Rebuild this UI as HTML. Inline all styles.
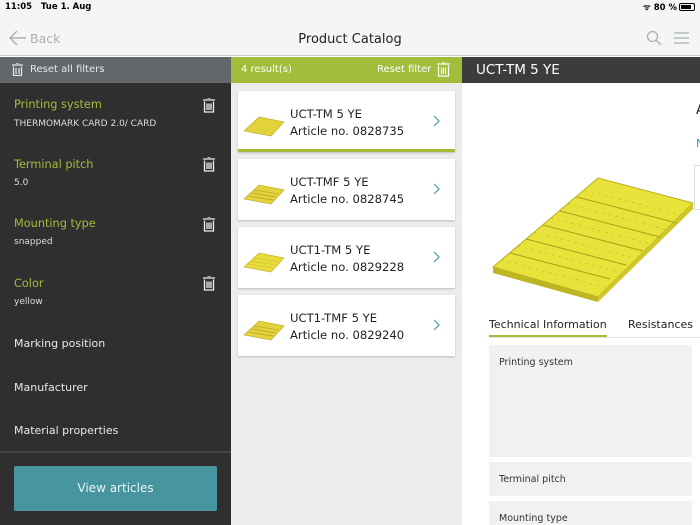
<!DOCTYPE html>
<html><head><meta charset="utf-8"><style>
*{margin:0;padding:0;box-sizing:border-box}
html,body{width:700px;height:525px;overflow:hidden}
body{font-family:"DejaVu Sans","Liberation Sans",sans-serif;position:relative;background:#fff}
.a{position:absolute}
.st{font-size:8.5px;color:#000;font-weight:bold}
.lab{color:#a2bd3a;font-size:11.3px}
.val{color:#ddd;font-size:9px}
.it{color:#e8e8e8;font-size:11px}
.card{position:absolute;left:238px;width:217px;height:61px;background:#fff;box-shadow:0 1px 2px rgba(0,0,0,.2)}
.card .t{position:absolute;left:52px;top:15px;font-size:11.6px;color:#222;line-height:17px}
.card svg.c{position:absolute;right:15px;top:24px}
.box{position:absolute;left:489px;width:203px;background:#f1f1f1;font-size:9.5px;color:#333;padding:10px}
</style></head><body>
<div class="a" style="left:0;top:0;width:700px;height:56px;background:#f5f5f5;border-bottom:1px solid #ccc"></div>
<div class="a st" style="left:5px;top:2px">11:05&nbsp;&nbsp; Tue 1. Aug</div>
<div class="a st" style="left:643px;top:2px">ᯤ 80 %</div>
<div class="a" style="left:679px;top:3px;width:16px;height:8px;border:1px solid #000;border-radius:2px;padding:1px"><div style="width:10px;height:4px;background:#000"></div></div>
<svg class="a" style="left:9px;top:30px" width="18" height="16"><path d="M8 1L1 8L8 15M1 8H17" stroke="#a8b0b4" stroke-width="1.5" fill="none"/></svg>
<div class="a" style="left:30px;top:31px;font-size:12.5px;color:#a8b0b4">Back</div>
<div class="a" style="left:0;width:700px;top:32px;text-align:center;font-size:13px;color:#222">Product Catalog</div>
<svg class="a" style="left:646px;top:30px" width="16" height="16"><circle cx="6.5" cy="6.5" r="5" stroke="#a8b0b4" stroke-width="1.3" fill="none"/><path d="M10 10L15 15" stroke="#a8b0b4" stroke-width="1.3"/></svg>
<svg class="a" style="left:674px;top:32px" width="15" height="12"><path d="M0 1H15M0 6H15M0 11H15" stroke="#a8b0b4" stroke-width="1.3"/></svg>

<div class="a" style="left:0;top:57px;width:231px;height:26px;background:#636769"></div>
<svg class="a" style="left:12px;top:63px" width="11" height="13"><path d="M0 2H11M4 0H7M1.5 3.5V12.5H9.5V3.5M4 5V11M7 5V11" stroke="#e8e8e8" stroke-width="1.2" fill="none"/></svg>
<div class="a" style="left:30px;top:64px;font-size:10px;color:#e8e8e8">Reset all filters</div>
<div class="a" style="left:231px;top:57px;width:231px;height:26px;background:#a2bd3a"></div>
<div class="a" style="left:241px;top:64px;font-size:10px;color:#fff">4 result(s)</div>
<div class="a" style="left:377px;top:64px;font-size:10px;color:#fff">Reset filter</div>
<svg class="a" style="left:437px;top:62px" width="13" height="15"><path d="M0 2H13M5 0H8M1.5 3.5V14H11.5V3.5M4.5 5.5V12M6.5 5.5V12M8.5 5.5V12" stroke="#fff" stroke-width="1.2" fill="none"/></svg>
<div class="a" style="left:462px;top:57px;width:238px;height:26px;background:#3c3c3c"></div>
<div class="a" style="left:476px;top:62px;font-size:13.5px;color:#fff">UCT-TM 5 YE</div>

<div class="a" style="left:0;top:83px;width:231px;height:442px;background:#2f2f2f"></div>
<div class="a lab" style="left:14px;top:98px">Printing system</div><div class="a val" style="left:14px;top:119px">THERMOMARK CARD 2.0/ CARD</div>
<div class="a lab" style="left:14px;top:158px">Terminal pitch</div><div class="a val" style="left:14px;top:178px">5.0</div>
<div class="a lab" style="left:14px;top:217px">Mounting type</div><div class="a val" style="left:14px;top:237px">snapped</div>
<div class="a lab" style="left:14px;top:277px">Color</div><div class="a val" style="left:14px;top:297px">yellow</div>
<svg class="a" style="left:203px;top:98px" width="12" height="15"><path d="M0 2H12M4.5 0H7.5M1.5 3.5V14H10.5V3.5M4 5.5V12M6 5.5V12M8 5.5V12" stroke="#eee" stroke-width="1.3" fill="none"/></svg>
<svg class="a" style="left:203px;top:157px" width="12" height="15"><path d="M0 2H12M4.5 0H7.5M1.5 3.5V14H10.5V3.5M4 5.5V12M6 5.5V12M8 5.5V12" stroke="#eee" stroke-width="1.3" fill="none"/></svg>
<svg class="a" style="left:203px;top:217px" width="12" height="15"><path d="M0 2H12M4.5 0H7.5M1.5 3.5V14H10.5V3.5M4 5.5V12M6 5.5V12M8 5.5V12" stroke="#eee" stroke-width="1.3" fill="none"/></svg>
<svg class="a" style="left:203px;top:276px" width="12" height="15"><path d="M0 2H12M4.5 0H7.5M1.5 3.5V14H10.5V3.5M4 5.5V12M6 5.5V12M8 5.5V12" stroke="#eee" stroke-width="1.3" fill="none"/></svg>
<div class="a it" style="left:14px;top:337px">Marking position</div>
<div class="a it" style="left:14px;top:381px">Manufacturer</div>
<div class="a it" style="left:14px;top:424px">Material properties</div>
<div class="a" style="left:0;top:451px;width:231px;height:2px;background:#444"></div>
<div class="a" style="left:14px;top:466px;width:203px;height:45px;background:#47959e;border-radius:2px;color:#e8f4f5;font-size:12px;text-align:center;line-height:45px">View articles</div>

<div class="a" style="left:231px;top:83px;width:231px;height:442px;background:#ececec"></div>
<div class="card" style="top:91px;border-bottom:3px solid #a2bd3a"><svg class="a" style="left:5px;top:24px" width="42" height="22"><polygon points="1,16 16,2 41,7 28,21" fill="#e2d33a" stroke="#b9a925" stroke-width=".6"/></svg><div class="t">UCT-TM 5 YE<br>Article no. 0828735</div><svg class="c" width="7" height="12"><path d="M1 1L6 6L1 11" stroke="#4a9ba5" stroke-width="1.2" fill="none"/></svg></div>
<div class="card" style="top:159px"><svg class="a" style="left:5px;top:24px" width="42" height="22"><polygon points="1,16 16,2 41,7 28,21" fill="#e2d33a" stroke="#b9a925" stroke-width=".6"/><path d="M8 10L33 14M11 7L36 11M5 13L30 17" stroke="#a8961e" stroke-width=".6"/></svg><div class="t">UCT-TMF 5 YE<br>Article no. 0828745</div><svg class="c" width="7" height="12"><path d="M1 1L6 6L1 11" stroke="#4a9ba5" stroke-width="1.2" fill="none"/></svg></div>
<div class="card" style="top:227px"><svg class="a" style="left:5px;top:24px" width="42" height="22"><polygon points="1,16 16,2 41,7 28,21" fill="#e8dc3c" stroke="#b9a925" stroke-width=".6"/><path d="M8 10L33 14M11 7L36 11M5 13L30 17" stroke="#c4b22a" stroke-width=".4"/></svg><div class="t">UCT1-TM 5 YE<br>Article no. 0829228</div><svg class="c" width="7" height="12"><path d="M1 1L6 6L1 11" stroke="#4a9ba5" stroke-width="1.2" fill="none"/></svg></div>
<div class="card" style="top:295px"><svg class="a" style="left:5px;top:24px" width="42" height="22"><polygon points="1,16 16,2 41,7 28,21" fill="#e2d33a" stroke="#b9a925" stroke-width=".6"/><path d="M8 10L33 14M11 7L36 11M5 13L30 17" stroke="#a8961e" stroke-width=".6"/></svg><div class="t">UCT1-TMF 5 YE<br>Article no. 0829240</div><svg class="c" width="7" height="12"><path d="M1 1L6 6L1 11" stroke="#4a9ba5" stroke-width="1.2" fill="none"/></svg></div>

<div class="a" style="left:696px;top:103px;font-size:13px;color:#222">A</div>
<div class="a" style="left:696px;top:137px;font-size:11px;color:#4a9ba5">N</div>
<div class="a" style="left:694px;top:165px;width:10px;height:45px;border:1px solid #ddd;background:#fff"></div>
<svg class="a" style="left:488px;top:175px" width="210" height="128">
<polygon points="5,92 110,3 205,28 110,122" fill="#e8e23a" stroke="#b8b020" stroke-width="1"/>
<polygon points="5,92 110,122 110,127 5,98" fill="#bdb622"/>
<polygon points="110,122 205,28 205,34 110,127" fill="#cfc82a"/>
<g stroke="#a9a21c" stroke-width="1">
<path d="M22,78L122,104M38,64L138,90M55,50L155,76M72,36L172,62M89,22L189,48"/>
</g>
<g stroke="#b5ae22" stroke-width=".6" stroke-dasharray="2 5">
<path d="M14,85L116,112M30,71L130,97M46,57L146,83M63,43L163,69M80,29L180,55M97,15L197,41"/>
</g>
</svg>
<div class="a" style="left:489px;top:318px;font-size:11px;color:#222">Technical Information</div>
<div class="a" style="left:628px;top:318px;font-size:11px;color:#222">Resistances</div>
<div class="a" style="left:489px;top:337px;width:211px;height:1px;background:#e6e6e6"></div>
<div class="a" style="left:489px;top:335px;width:118px;height:2px;background:#a2bd3a"></div>
<div class="box" style="top:345px;height:112px;padding-top:12px">Printing system</div>
<div class="box" style="top:462px;height:34px;padding-top:12px">Terminal pitch</div>
<div class="box" style="top:501px;height:24px;padding-top:12px">Mounting type</div>
</body></html>
